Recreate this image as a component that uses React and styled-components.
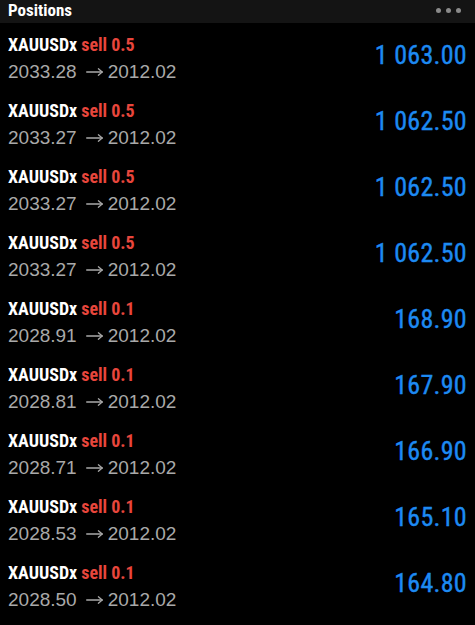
import React from "react";
import styled, { createGlobalStyle } from "styled-components";

const Global = createGlobalStyle`
  html, body { margin: 0; padding: 0; background: #000; }
  body { font-family: Roboto, "Liberation Sans", sans-serif; }
`;

const Page = styled.div`
  width: 475px;
  height: 625px;
  background: #000;
  overflow: hidden;
  display: flex;
  flex-direction: column;
`;

const Header = styled.div`
  height: 23px;
  background: #141414;
  display: flex;
  align-items: center;
  justify-content: space-between;
  padding: 0 14px 0 8px;
  flex-shrink: 0;
`;

const Title = styled.div`
  font-family: "Roboto Condensed", Roboto, sans-serif;
  font-weight: 700;
  font-size: 17px;
  line-height: 18px;
  color: #fff;
  margin-top: -3px;
`;

const Dots = styled.div`
  display: flex;
  gap: 5px;
  margin-top: -3px;
`;

const Dot = styled.span`
  width: 5px;
  height: 5px;
  border-radius: 50%;
  background: #8a8a8a;
`;

const List = styled.div`
  display: flex;
  flex-direction: column;
`;

const Row = styled.div`
  height: 66px;
  display: flex;
  align-items: center;
  justify-content: space-between;
  padding: 0 8px;
  box-sizing: border-box;
`;

const Left = styled.div`
  display: flex;
  flex-direction: column;
  gap: 5px;
  margin-top: 4px;
`;

const SymbolLine = styled.div`
  font-family: "Roboto Condensed", Roboto, sans-serif;
  font-weight: 700;
  font-size: 18px;
  line-height: 22px;
  color: #fff;
  display: flex;
  gap: 4px;
`;

const Side = styled.span`
  color: #e8463c;
  font-weight: 700;
`;

const PriceLine = styled.div`
  font-family: "Liberation Sans", Arial, sans-serif;
  font-size: 19px;
  line-height: 22px;
  color: #a9a9a9;
  display: flex;
  align-items: center;
`;

const ArrowIcon = styled.svg`
  width: 17px;
  height: 10px;
  margin: 1px 5px 0 9px;
  flex-shrink: 0;
`;

const Value = styled.div`
  font-family: "Roboto Condensed", Roboto, sans-serif;
  font-weight: 400;
  font-size: 26px;
  letter-spacing: 0.3px;
  line-height: 30px;
  color: #1d8af2;
  margin-top: -3px;
  -webkit-text-stroke: 0.4px #1d8af2;
`;

const Arrow = () => (
  <ArrowIcon viewBox="0 0 17 10" fill="none" stroke="#a9a9a9" strokeWidth="1.3" strokeLinecap="round" strokeLinejoin="round">
    <path d="M0.7 5H16.2" />
    <path d="M12.4 1.8L16.2 5L12.4 8.2" />
  </ArrowIcon>
);

const positions = [
  { lot: "0.5", open: "2033.28", value: "1 063.00" },
  { lot: "0.5", open: "2033.27", value: "1 062.50" },
  { lot: "0.5", open: "2033.27", value: "1 062.50" },
  { lot: "0.5", open: "2033.27", value: "1 062.50" },
  { lot: "0.1", open: "2028.91", value: "168.90" },
  { lot: "0.1", open: "2028.81", value: "167.90" },
  { lot: "0.1", open: "2028.71", value: "166.90" },
  { lot: "0.1", open: "2028.53", value: "165.10" },
  { lot: "0.1", open: "2028.50", value: "164.80" },
];

export default function App() {
  return (
    <Page>
      <Global />
      <Header>
        <Title>Positions</Title>
        <Dots>
          <Dot />
          <Dot />
          <Dot />
        </Dots>
      </Header>
      <List>
        {positions.map((p, i) => (
          <Row key={i}>
            <Left>
              <SymbolLine>
                <span>XAUUSDx</span>
                <Side>sell {p.lot}</Side>
              </SymbolLine>
              <PriceLine>
                <span>{p.open}</span>
                <Arrow />
                <span>2012.02</span>
              </PriceLine>
            </Left>
            <Value>{p.value}</Value>
          </Row>
        ))}
      </List>
    </Page>
  );
}
